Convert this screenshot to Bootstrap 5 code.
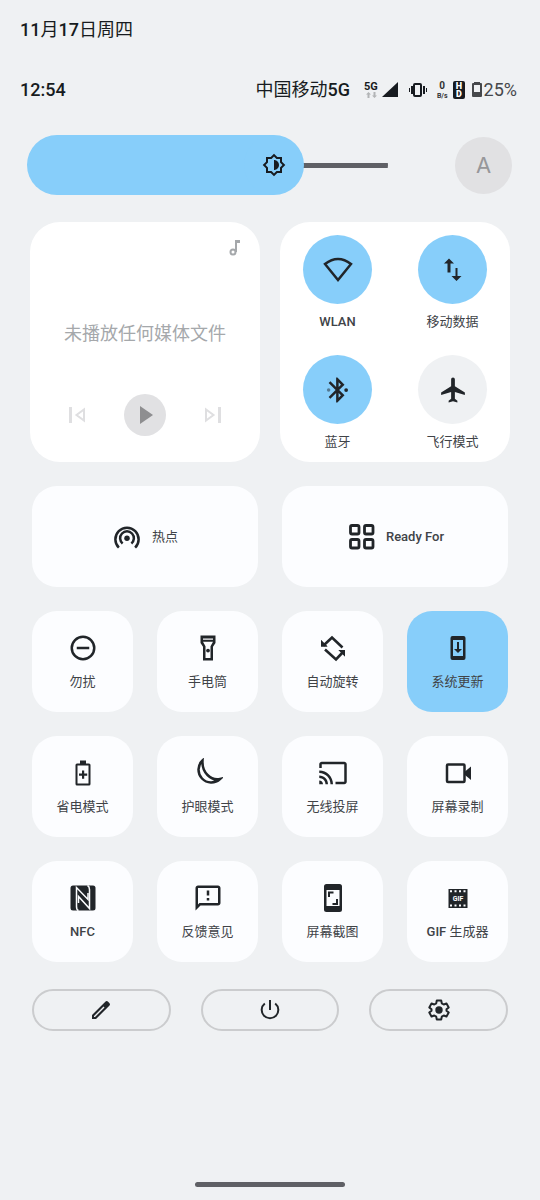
<!DOCTYPE html>
<html lang="zh-CN">
<head>
<meta charset="utf-8">
<meta name="viewport" content="width=device-width, initial-scale=1">
<title>快捷设置</title>
<link href="https://cdn.jsdelivr.net/npm/bootstrap@5.3.0/dist/css/bootstrap.min.css" rel="stylesheet">
<style>
  :root { --panel: #eff1f3; --accent: #87cefa; --ink: #171b20; --muted: #e1e1e3; }
  body { background: var(--panel); color: var(--ink); font-family: Roboto, "Noto Sans CJK SC", sans-serif; font-size: 18px; line-height: 24px; }
  button { color: var(--ink); }
  svg { display: block; fill: currentColor; flex: none; stroke-width: 2; }
  .ln { fill: none; stroke: currentColor; }
  .latin { font-weight: 500; }

  .date-row { padding: 18px 20px; }
  .status-row { padding: 18px 23px 18px 20px; }
  .status-icons { gap: 5px; }
  .net-speed { font-size: 7px; line-height: 8px; font-weight: 700; color: #333; }
  .net-speed span:first-child { font-size: 10px; line-height: 12px; }
  .charge { color: #46484b; }

  .bright-row { padding: 15px 28px 27px 27px; gap: 67px; }
  .bright { --pos: calc(30px + (100% - 60px) * var(--level)); }
  .bright input { appearance: none; -webkit-appearance: none; height: 60px; border-radius: 30px; overflow: hidden; display: block;
    background: linear-gradient(var(--accent), var(--accent)) 0 0 / var(--pos) 100% no-repeat,
                linear-gradient(#5f6065, #5f6065) 0 50% / 100% 5px no-repeat; }
  .bright input::-webkit-slider-thumb { -webkit-appearance: none; width: 60px; height: 60px; border-radius: 30px; background: var(--accent); }
  .bright svg { position: absolute; top: 18px; left: var(--pos); margin-left: -12px; pointer-events: none; }
  .auto-btn { width: 57px; height: 57px; background: var(--muted); color: #97979a; font: 22px Inter, sans-serif; }

  .big-cards { display: grid; grid-template-columns: 1fr 1fr; gap: 20px; padding: 0 30px 24px; }
  .big-card { background: #fff; border-radius: 30px; height: 240px; }
  .media { color: #a5a8ab; padding: 17px 18px 26px; }
  .media p { padding-top: 42px; }
  .media .skip { color: #dfdfe1; }
  .media-controls { gap: 34px; }
  .play-btn { width: 42px; height: 42px; background: var(--muted); color: #8e8e90; }

  .toggles { display: grid; grid-template-columns: 1fr 1fr; padding-top: 13px; }
  .toggle-btn { height: 120px; gap: 8px; }
  .round { width: 69px; height: 69px; background: var(--panel); }
  .on .round, .tile-btn.on { background: var(--accent); }
  .cap { font-size: 13px; line-height: 20px; color: #404347; white-space: nowrap; }

  .tiles { display: grid; grid-template-columns: repeat(4, 1fr); padding: 0 32px; }
  .tile-btn { background: #fcfdff; border-radius: 25px; height: 101px; }
  .tile-btn.wide { grid-column: span 2; gap: 10px; }
  .tile-btn.tall { flex-direction: column; padding-top: 22px; gap: 9px; }

  .actions { display: grid; grid-template-columns: repeat(3, 1fr); gap: 30px; padding: 27px 32px; }
  .pill-btn { height: 42px; border: 2px solid #cbccce; }
  .home-bar { width: 150px; height: 5px; background: #5f6065; margin-bottom: 13px; }
</style>
</head>
<body>
<div class="min-vh-100 d-flex flex-column">
  <header>
    <div class="date-row"><span class="latin">11</span>月<span class="latin">17</span>日周四</div>
    <div class="status-row d-flex align-items-center justify-content-between">
      <div class="latin">12:54</div>
      <div class="status-icons d-flex align-items-center">
        <span class="me-2">中国移动<span class="latin">5G</span></span>
        <svg width="36" height="22" viewBox="0 -2 36 22"><text x="1" y="9" font-size="11" font-weight="700">5G</text><path d="M35 1v15H19z"/><path fill="#b2b4b6" d="M5.500 11l2.500 2.500H6.500V17h-2v-3.500H3zM11.500 17L9 14.500h1.500V11h2v3.500H14z"/></svg>
        <svg class="ms-1" width="20" height="16" viewBox="0 0 20 16"><rect class="ln" x="6" y="2" width="7" height="12" rx="1"/><path d="M3 4h2v8H3zM1 6h1v4H1zM15 4h2v8h-2zM18 6h1v4h-1z"/></svg>
        <span class="net-speed d-flex flex-column align-items-center ms-1"><span>0</span><span>B/s</span></span>
        <svg width="12" height="18" viewBox="0 0 12 18"><rect width="12" height="18" rx="2"/><g fill="#fff" font-size="9" font-weight="900" text-anchor="middle"><text x="6" y="8">H</text><text x="6" y="16">D</text></g></svg>
        <span class="charge d-flex align-items-center"><svg width="14" height="18" viewBox="0 0 14 18"><path d="M4 1h6v2H4z"/><path fill-rule="evenodd" d="M3 2h8q1 0 1 1v12q0 1-1 1H3q-1 0-1-1V3q0-1 1-1zM4 4v7h6V4z"/></svg>25%</span>
      </div>
    </div>
    <div class="bright-row d-flex align-items-center">
      <div class="bright position-relative flex-grow-1" style="--level:.721">
        <input class="w-100" type="range" min="0" max="1000" value="721" aria-label="亮度">
        <svg width="24" height="24" viewBox="0 0 24 24"><path d="M20 8.690V4h-4.690L12 .690 8.690 4H4v4.690L.690 12 4 15.310V20h4.690L12 23.310 15.310 20H20v-4.690L23.310 12zm-2 5.790V18h-3.520L12 20.480 9.520 18H6v-3.520L3.520 12 6 9.520V6h3.520L12 3.520 14.480 6H18v3.520L20.480 12zM12 7v10c2.760 0 5-2.240 5-5s-2.240-5-5-5z"/></svg>
      </div>
      <button class="auto-btn btn rounded-circle border-0 p-0" type="button" aria-label="自动亮度">A</button>
    </div>
  </header>

  <main>
    <div class="big-cards">
      <section class="big-card media d-flex flex-column justify-content-between align-items-center">
        <svg class="align-self-end" width="14" height="17" viewBox="0 0 14 17"><circle class="ln" cx="5" cy="13" r="2.500"/><path d="M7 1h5v3H9v9H7z"/></svg>
        <p class="m-0 text-nowrap">未播放任何媒体文件</p>
        <div class="media-controls d-flex align-items-center mt-4">
          <button class="skip btn border-0 p-0" type="button" aria-label="上一首"><svg width="26" height="26" viewBox="0 0 26 26"><path d="M5 5h3v16H5z"/><path class="ln" d="M20 7.500v11L12.500 13z"/></svg></button>
          <button class="play-btn btn rounded-circle border-0 p-0 d-flex align-items-center justify-content-center" type="button" aria-label="播放"><svg width="18" height="20" viewBox="0 0 18 20"><path d="M4 1v18l13-9z"/></svg></button>
          <button class="skip btn border-0 p-0" type="button" aria-label="下一首"><svg width="26" height="26" viewBox="0 0 26 26"><path d="M18 5h3v16h-3z"/><path class="ln" d="M6 7.500v11l7.500-5.500z"/></svg></button>
        </div>
      </section>
      <section class="big-card toggles">
        <button class="toggle-btn on btn border-0 p-0 d-flex flex-column align-items-center" type="button" aria-pressed="true">
          <span class="round rounded-circle d-flex align-items-center justify-content-center"><svg width="30" height="30" viewBox="0 0 30 30"><path class="ln" stroke-width="2.500" d="M2 9q13-10 26 0L15 25z"/></svg></span>
          <span class="cap latin">WLAN</span>
        </button>
        <button class="toggle-btn on btn border-0 p-0 d-flex flex-column align-items-center" type="button" aria-pressed="true">
          <span class="round rounded-circle d-flex align-items-center justify-content-center"><svg width="30" height="30" viewBox="0 0 30 30"><path d="M11 3.500l5 5h-3.500v9h-3v-9H6zM18.500 26l-5-5h4v-8h2v8h4z"/></svg></span>
          <span class="cap">移动数据</span>
        </button>
        <button class="toggle-btn on btn border-0 p-0 d-flex flex-column align-items-center" type="button" aria-pressed="true">
          <span class="round rounded-circle d-flex align-items-center justify-content-center"><svg width="30" height="30" viewBox=".500 0 24 24"><path d="M17.710 7.710L12 2h-1v7.590L6.410 5 5 6.410 10.590 12 5 17.590 6.410 19 11 14.410V22h1l5.710-5.710-4.300-4.290zM13 5.830l1.880 1.880L13 9.590zm1.880 10.460L13 18.170v-3.760z"/><circle cx="19" cy="12" r="1.500"/><circle cx="5" cy="12" r="1.400" opacity=".5"/></svg></span>
          <span class="cap">蓝牙</span>
        </button>
        <button class="toggle-btn btn border-0 p-0 d-flex flex-column align-items-center" type="button" aria-pressed="false">
          <span class="round rounded-circle d-flex align-items-center justify-content-center"><svg width="30" height="30" viewBox="-.500 0 24 24"><path d="M21 16v-2l-8-5V3.500c0-.830-.670-1.500-1.500-1.500S10 2.670 10 3.500V9l-8 5v2l8-2.500V19l-2 1.500V22l3.500-1 3.500 1v-1.500L13 19v-5.500z"/></svg></span>
          <span class="cap">飞行模式</span>
        </button>
      </section>
    </div>

    <div class="tiles gap-4">
      <button class="tile-btn wide btn border-0 p-0 d-flex align-items-center justify-content-center" type="button">
        <svg width="30" height="30" viewBox="0 0 24 24"><circle cx="12" cy="13" r="2.200"/><path class="ln" d="M8.500 17.200a5.500 5.500 0 1 1 7 0"/><path class="ln" d="M5.500 20a9.300 9.300 0 1 1 13 0" transform="translate(0 .5)"/></svg>
        <span class="cap">热点</span>
      </button>
      <button class="tile-btn wide btn border-0 p-0 d-flex align-items-center justify-content-center" type="button">
        <svg width="30" height="30" viewBox="0 0 30 30"><g class="ln" stroke-width="2.800"><rect x="4.500" y="3.500" width="8.500" height="8.500" rx="1.500"/><rect x="18.500" y="3.500" width="8.500" height="8.500" rx="1.500"/><rect x="4.500" y="17.500" width="8.500" height="8.500" rx="1.500"/><rect x="18.500" y="17.500" width="8.500" height="8.500" rx="1.500"/></g></svg>
        <span class="cap latin">Ready For</span>
      </button>

      <button class="tile-btn tall btn border-0 px-0 pb-0 d-flex align-items-center" type="button">
        <svg width="30" height="30" viewBox="0 0 24 24"><circle class="ln" cx="12" cy="12" r="9"/><path d="M7 11h10v2H7z"/></svg>
        <span class="cap">勿扰</span>
      </button>
      <button class="tile-btn tall btn border-0 px-0 pb-0 d-flex align-items-center" type="button">
        <svg width="30" height="30" viewBox="0 0 24 24"><path fill-rule="evenodd" d="M6 2h12v6l-2 3v11H8V11L6 8zM8 4.300v1h8v-1zM8 7l2 3.500V20h4v-9.500L16 7z"/><circle cx="12" cy="14" r="1.500"/></svg>
        <span class="cap">手电筒</span>
      </button>
      <button class="tile-btn tall btn border-0 px-0 pb-0 d-flex align-items-center" type="button">
        <svg width="30" height="30" viewBox="0 0 30 30"><path class="ln" stroke-width="2.600" d="M5.500 12.500L14 4.500 24.500 14.500M7 16.500L18 26.500l7.500-8"/><path d="M3 7v6.500h6.500zM27 23.500V17h-6.500z"/><path d="M3 7v6.500h6.500l-2-2zM27 23.500V17h-6.500l2 2z"/></svg>
        <span class="cap">自动旋转</span>
      </button>
      <button class="tile-btn tall on btn border-0 px-0 pb-0 d-flex align-items-center" type="button" aria-pressed="true">
        <svg width="30" height="30" viewBox="0 0 30 30"><path fill-rule="evenodd" d="M9.500 3h11q2 0 2 2v20q0 2-2 2h-11q-2 0-2-2V5q0-2 2-2zM10 7v16h10V7z"/><path d="M14 9h2v7h3l-4 4-4-4h3z"/></svg>
        <span class="cap">系统更新</span>
      </button>

      <button class="tile-btn tall btn border-0 px-0 pb-0 d-flex align-items-center" type="button">
        <svg width="30" height="30" viewBox="0 0 30 30"><path d="M12 2.500h6v4h-6z"/><rect class="ln" x="8.500" y="6.500" width="13" height="20" rx=".500"/><path d="M14 12.500h2.200v3h3v2.200h-3v3H14v-3h-3v-2.200h3z"/></svg>
        <span class="cap">省电模式</span>
      </button>
      <button class="tile-btn tall btn border-0 px-0 pb-0 d-flex align-items-center" type="button">
        <svg width="30" height="30" viewBox="0 0 30 30"><path class="ln" stroke-width="2.500" d="M9.500 2.500A12.500 12.500 0 1 0 27 21Q20 22.500 14.500 17T9.500 2.500z"/></svg>
        <span class="cap">护眼模式</span>
      </button>
      <button class="tile-btn tall btn border-0 px-0 pb-0 d-flex align-items-center" type="button">
        <svg width="30" height="30" viewBox="0 0 24 24"><path d="M21 3H3c-1.100 0-2 .900-2 2v3h2V5h18v14h-7v2h7c1.100 0 2-.900 2-2V5c0-1.100-.900-2-2-2zM1 18v3h3c0-1.660-1.340-3-3-3zm0-4v2c2.760 0 5 2.240 5 5h2c0-3.870-3.130-7-7-7zm0-4v2c4.970 0 9 4.030 9 9h2c0-6.080-4.930-11-11-11z"/></svg>
        <span class="cap">无线投屏</span>
      </button>
      <button class="tile-btn tall btn border-0 px-0 pb-0 d-flex align-items-center" type="button">
        <svg width="30" height="30" viewBox="0 0 30 30"><rect class="ln" x="4" y="6.500" width="17.500" height="17.500" rx="1" stroke-width="2.500"/><path d="M22 13.500L28 8.500v13.500l-6-5z"/></svg>
        <span class="cap">屏幕录制</span>
      </button>

      <button class="tile-btn tall btn border-0 px-0 pb-0 d-flex align-items-center" type="button">
        <svg width="30" height="30" viewBox="0 0 30 30"><rect x="2.500" y="2.500" width="25" height="25" rx="2.500"/><g fill="none" stroke="#fcfdff" stroke-width="1.500"><path d="M10.500 27.500Q8.500 27 8.500 23.500V4.500L20 16.500V10"/><path d="M19.500 2.500Q21.500 3.500 21.500 6.500v19L10.500 13.500V20"/></g></svg>
        <span class="cap latin">NFC</span>
      </button>
      <button class="tile-btn tall btn border-0 px-0 pb-0 d-flex align-items-center" type="button">
        <svg width="30" height="30" viewBox="0 0 24 24"><path d="M20 2H4c-1.100 0-2 .900-2 2v18l4-4h14c1.100 0 2-.900 2-2V4c0-1.100-.900-2-2-2zm0 14H5.170L4 17.170V4h16zM11 6h2v4h-2zM11 12h2v2h-2z"/></svg>
        <span class="cap">反馈意见</span>
      </button>
      <button class="tile-btn tall btn border-0 px-0 pb-0 d-flex align-items-center" type="button">
        <svg width="30" height="30" viewBox="0 0 30 30"><path fill-rule="evenodd" d="M8.500 1h13q2.500 0 2.500 2.500v23q0 2.500-2.500 2.500h-13Q6 29 6 26.500v-23Q6 1 8.500 1zM8.500 7v16h13V7z"/><path class="ln" d="M11 14V9.500h4.500M19 16v5h-4.500"/></svg>
        <span class="cap">屏幕截图</span>
      </button>
      <button class="tile-btn tall btn border-0 px-0 pb-0 d-flex align-items-center" type="button">
        <svg width="30" height="30" viewBox="0 0 30 30"><path d="M5.500 6h19v19h-19z"/><path fill="none" stroke="#fcfdff" stroke-dasharray="2 2.500" d="M7 8.300h17M7 22.500h17"/><text x="15" y="18" text-anchor="middle" font-size="7" font-weight="700" fill="#fcfdff">GIF</text></svg>
        <span class="cap"><span class="latin">GIF</span> 生成器</span>
      </button>
    </div>

    <div class="actions">
      <button class="pill-btn btn rounded-pill p-0 d-flex align-items-center justify-content-center" type="button" aria-label="编辑"><svg width="24" height="24" viewBox="0 0 24 24"><path fill-rule="evenodd" d="M3 17v4h4L20.300 7.700q1.400-1.400 0-2.800l-1.200-1.200q-1.400-1.400-2.800 0zM5 18L14.500 8.500l1 1L6 19H5z"/></svg></button>
      <button class="pill-btn btn rounded-pill p-0 d-flex align-items-center justify-content-center" type="button" aria-label="电源"><svg width="24" height="24" viewBox="0 0 24 24"><path d="M11 2h2v10h-2z"/><path class="ln" d="M6.800 5.500a8.300 8.300 0 1 0 10.400 0"/></svg></button>
      <button class="pill-btn btn rounded-pill p-0 d-flex align-items-center justify-content-center" type="button" aria-label="设置"><svg width="24" height="24" viewBox="0 0 24 24"><path class="ln" stroke-linejoin="round" d="M9.800 2.500h4.400l.6 2.900 1.900 1.100 2.800-1 2.200 3.900-2.200 1.900v1.400l2.200 1.900-2.200 3.900-2.800-1-1.900 1.100-.6 2.900H9.800l-.6-2.900-1.900-1.100-2.800 1-2.200-3.900 2.200-1.900v-1.400L2.300 9.400l2.200-3.900 2.800 1 1.900-1.100z"/><circle cx="12" cy="12" r="3.700"/></svg></button>
    </div>
  </main>
  <div class="home-bar rounded-pill mt-auto mx-auto"></div>
</div>
<script src="https://cdn.jsdelivr.net/npm/bootstrap@5.3.0/dist/js/bootstrap.bundle.min.js"></script>
</body>
</html>
